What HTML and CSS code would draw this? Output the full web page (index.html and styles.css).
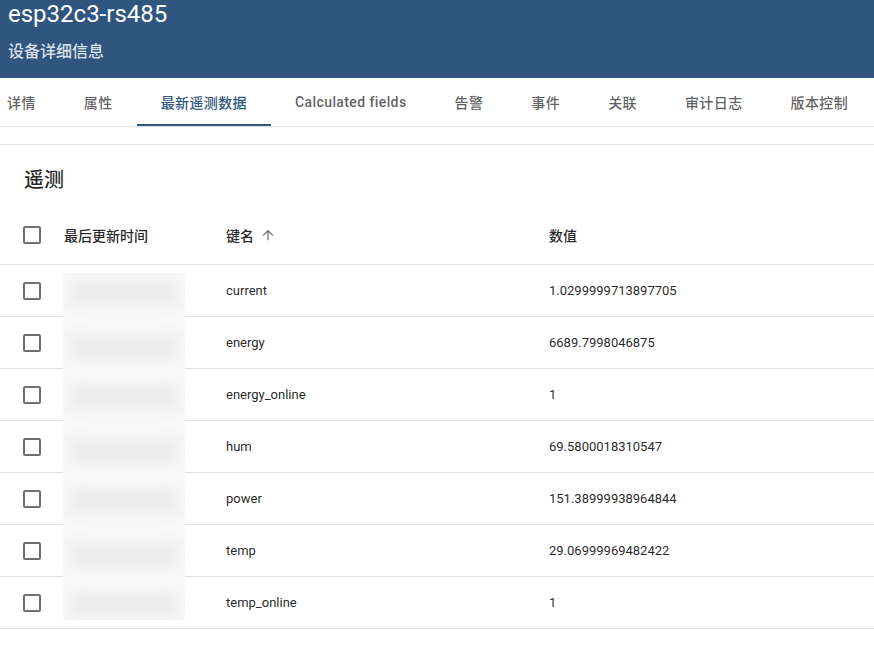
FILE: index.html
```html
<!DOCTYPE html>
<html lang="zh-CN">
<head>
  <meta charset="UTF-8">
  <title>esp32c3-rs485</title>
  <link rel="stylesheet" href="styles.css">
</head>
<body>

  <!-- 设备标题 -->
  <header class="device-header">
    <div class="device-name">esp32c3-rs485</div>
    <div class="device-sub">设备详细信息</div>
  </header>

  <!-- 标签页 -->
  <nav class="tab-bar">
    <div class="tab-list">
      <div class="tab">详情</div>
      <div class="tab">属性</div>
      <div class="tab active">最新遥测数据</div>
      <div class="tab">Calculated fields</div>
      <div class="tab">告警</div>
      <div class="tab">事件</div>
      <div class="tab">关联</div>
      <div class="tab">审计日志</div>
      <div class="tab">版本控制</div>
    </div>
  </nav>

  <main class="content">
    <section class="card">
      <h2 class="card-title">遥测</h2>

      <div class="table">
        <div class="row head">
          <div class="cell check"><span class="box"></span></div>
          <div class="cell">最后更新时间</div>
          <div class="cell">键名
            <svg class="sort" viewBox="0 0 24 24"><path d="M4 12l1.41 1.41L11 7.83V20h2V7.830l5.58 5.59L20 12l-8-8-8 8z"/></svg>
          </div>
          <div class="cell">数值</div>
        </div>

        <div class="row">
          <div class="cell check"><span class="box"></span></div>
          <div class="cell time"><div class="blur"><i></i></div></div>
          <div class="cell">current</div>
          <div class="cell">1.0299999713897705</div>
        </div>
        <div class="row">
          <div class="cell check"><span class="box"></span></div>
          <div class="cell time"><div class="blur"><i></i></div></div>
          <div class="cell">energy</div>
          <div class="cell">6689.7998046875</div>
        </div>
        <div class="row">
          <div class="cell check"><span class="box"></span></div>
          <div class="cell time"><div class="blur"><i></i></div></div>
          <div class="cell">energy_online</div>
          <div class="cell">1</div>
        </div>
        <div class="row">
          <div class="cell check"><span class="box"></span></div>
          <div class="cell time"><div class="blur"><i></i></div></div>
          <div class="cell">hum</div>
          <div class="cell">69.5800018310547</div>
        </div>
        <div class="row">
          <div class="cell check"><span class="box"></span></div>
          <div class="cell time"><div class="blur"><i></i></div></div>
          <div class="cell">power</div>
          <div class="cell">151.38999938964844</div>
        </div>
        <div class="row">
          <div class="cell check"><span class="box"></span></div>
          <div class="cell time"><div class="blur"><i></i></div></div>
          <div class="cell">temp</div>
          <div class="cell">29.06999969482422</div>
        </div>
        <div class="row">
          <div class="cell check"><span class="box"></span></div>
          <div class="cell time"><div class="blur"><i></i></div></div>
          <div class="cell">temp_online</div>
          <div class="cell">1</div>
        </div>
      </div>
    </section>
  </main>

</body>
</html>
```

FILE: styles.css
```css
html, body {
  margin: 0;
  padding: 0;
  height: 100%;
  overflow: hidden;
  background: #fff;
  font-family: Roboto, "Noto Sans CJK SC", sans-serif;
  color: rgba(0, 0, 0, 0.87);
}

/* 顶部蓝色标题 */
.device-header {
  height: 78px;
  box-sizing: border-box;
  padding: 0 8px;
  background: #305680;
  color: #fff;
}

.device-name {
  font-size: 24px;
  line-height: 28px;
}

.device-sub {
  margin-top: 12px;
  font-size: 16px;
  line-height: 24px;
  font-weight: 500;
  color: rgba(255, 255, 255, 0.82);
}

/* 标签页 */
.tab-bar {
  height: 48px;
  border-bottom: 1px solid #e0e0e0;
  overflow: hidden;
}

.tab-list {
  display: flex;
  height: 100%;
  margin-left: -17px;
}

.tab {
  display: flex;
  align-items: center;
  padding: 0 24px;
  font-size: 14px;
  font-weight: 500;
  letter-spacing: 0.4px;
  color: rgba(0, 0, 0, 0.64);
  white-space: nowrap;
  box-sizing: border-box;
  border-bottom: 2px solid transparent;
  padding-top: 2px;
}

.tab.active {
  color: #305680;
  border-bottom-color: #305680;
}

/* 内容卡片 */
.content {
  padding-top: 17px;
}

.card {
  border-top: 1px solid #e4e4e4;
}

.card-title {
  margin: 0;
  height: 64px;
  box-sizing: border-box;
  padding: 23px 24px 0;
  font-size: 20px;
  line-height: 24px;
  font-weight: 500;
}

.row {
  display: grid;
  grid-template-columns: 64px 162px 323px 1fr;
  height: 52px;
  font-size: 13px;
}

.row.head {
  height: 56px;
  font-size: 14px;
  font-weight: 500;
  color: rgba(0, 0, 0, 0.87);
}

.cell {
  display: flex;
  align-items: center;
  border-bottom: 1px solid #e0e0e0;
  position: relative;
}

.head .cell {
  padding-bottom: 4px;
}

.cell.check {
  padding-left: 23px;
}

.box {
  width: 18px;
  height: 18px;
  box-sizing: border-box;
  border: 2px solid rgba(0, 0, 0, 0.56);
  border-radius: 2px;
}

.sort {
  width: 16px;
  height: 16px;
  margin-left: 6px;
  fill: rgba(0, 0, 0, 0.54);
}

/* 被模糊处理的时间 */
.blur {
  position: absolute;
  left: -1px;
  width: 122px;
  top: 8px;
  bottom: -9px;
  background: #f8f8f8;
  overflow: hidden;
  z-index: 1;
}

.row:last-child .blur {
  bottom: 8px;
}

.blur i {
  position: absolute;
  left: 6px;
  right: 6px;
  top: 10px;
  height: 22px;
  background: #ebebeb;
  filter: blur(7px);
}
```
